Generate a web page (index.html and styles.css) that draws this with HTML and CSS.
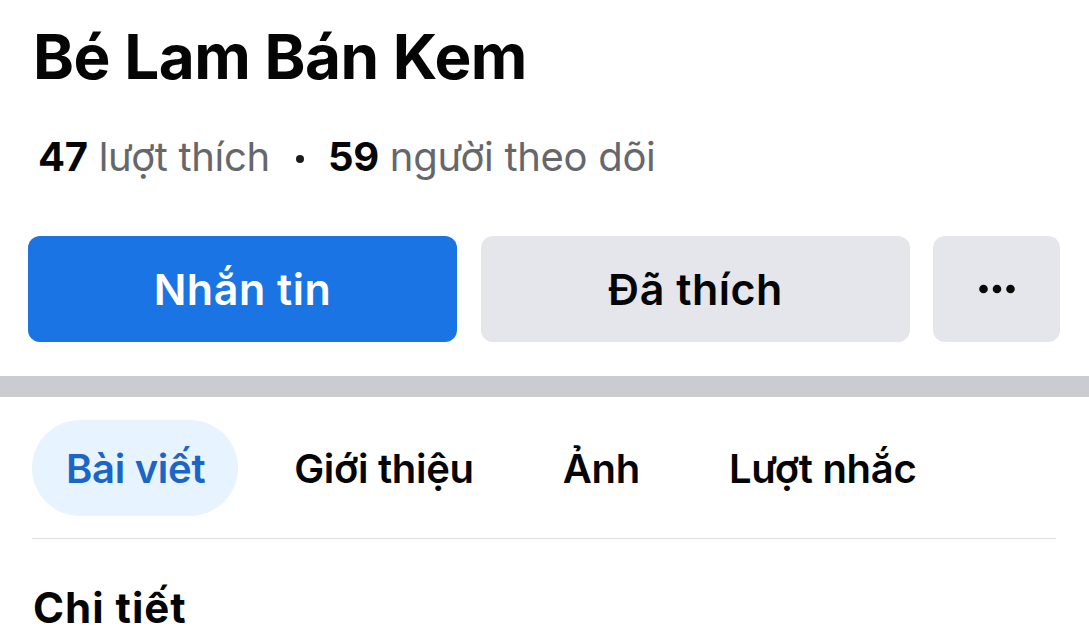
FILE: index.html
```html
<!DOCTYPE html>
<html lang="vi">
<head>
<meta charset="utf-8">
<link rel="stylesheet" href="styles.css">
</head>
<body>
<div class="page">
  <header class="head">
    <h1 class="title">Bé Lam Bán Kem</h1>
    <p class="stats"><b>47</b> lượt thích<span class="dot"></span><b>59</b> người theo dõi</p>
    <div class="actions">
      <button class="btn primary">Nhắn tin</button>
      <button class="btn secondary">Đã thích</button>
      <button class="btn more" aria-label="Thêm">
        <svg width="36" height="10" viewBox="0 0 36 10"><circle cx="4.5" cy="5" r="4.3" fill="#0a0a0a"/><circle cx="18" cy="5" r="4.3" fill="#0a0a0a"/><circle cx="31.5" cy="5" r="4.3" fill="#0a0a0a"/></svg>
      </button>
    </div>
  </header>
  <div class="band"></div>
  <nav class="tabs">
    <span class="tab active">Bài viết</span>
    <span class="tab">Giới thiệu</span>
    <span class="tab">Ảnh</span>
    <span class="tab">Lượt nhắc</span>
  </nav>
  <h2 class="section">Chi tiết</h2>
</div>
</body>
</html>
```
FILE: styles.css
```css
* { box-sizing: border-box; }
html, body { margin: 0; padding: 0; background: #fff; }
body { font-family: "Inter", "Liberation Sans", sans-serif; color: #050505; overflow: hidden; }
.page { width: 1089px; height: 630px; overflow: hidden; }
.head { padding: 0 29px 0 28px; }
.title { margin: 0; padding: 26px 0 0 5px; font-size: 62px; line-height: 62px; font-weight: 700; letter-spacing: -0.5px; }
.stats { margin: 0; padding: 45px 0 0 10px; font-size: 40px; line-height: 48px; color: #65676b; font-weight: 400; letter-spacing: -0.3px; }
.stats b { color: #050505; font-weight: 700; }
.dot { display: inline-block; width: 8px; height: 8px; border-radius: 50%; background: #1c1c1c; margin: 0 24px 0 26px; vertical-align: 8px; }
.actions { display: flex; gap: 23px; margin-top: 55px; }
.btn { border: 0; border-radius: 12px; height: 106px; font-family: inherit; font-size: 43px; font-weight: 600; letter-spacing: 0.5px; display: flex; align-items: center; justify-content: center; padding: 0; }
.primary { flex: 0 0 429px; background: #1b74e4; color: #fff; }
.secondary { flex: 0 0 429px; background: #e4e6eb; color: #050505; margin-left: 1px; }
.more { flex: 0 0 127px; background: #e4e6eb; }
.band { margin-top: 34px; height: 21px; background: #c9ccd1; }
.tabs { display: flex; align-items: center; gap: 22px; margin: 23px 33px 0 32px; height: 96px; border-bottom: 1px solid #dcdee3; padding-bottom: 22px; box-sizing: content-box; }
.tab { font-size: 40px; font-weight: 600; letter-spacing: -0.3px; color: #050505; height: 96px; display: flex; align-items: center; padding: 0 33px 0 34px; border-radius: 48px; }
.tab.active { background: #e7f3ff; color: #1b65c6; }
.section { margin: 0; padding: 48px 0 0 33px; font-size: 42px; font-weight: 700; line-height: 42px; letter-spacing: 1px; }
```
